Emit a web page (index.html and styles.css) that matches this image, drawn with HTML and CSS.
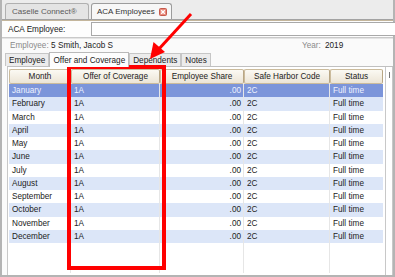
FILE: index.html
```html
<!DOCTYPE html>
<html>
<head>
<meta charset="utf-8">
<link rel="stylesheet" href="styles.css">
</head>
<body>
<div class="window">
  <div class="toptabs">
    <div class="ttab">Caselle Connect®</div>
    <div class="ttab active"><span>ACA Employees</span><span class="close"><svg width="8" height="8" viewBox="0 0 8 8"><rect x="0.5" y="0.5" width="7" height="7" rx="1" fill="#e98a7c" stroke="#c45a4c"/><path d="M2.2 2.2 L5.8 5.8 M5.8 2.2 L2.2 5.8" stroke="#fff" stroke-width="1.3"/></svg></span></div>
  </div>
  <div class="acarow">
    <span class="acalabel">ACA Employee:</span>
    <div class="acainput"></div>
  </div>
  <div class="emprow">
    <span class="lbl">Employee:</span>
    <span class="empnum">5</span>
    <span class="empname">Smith, Jacob S</span>
    <span class="lbl yearlbl">Year:</span>
    <span class="year">2019</span>
  </div>
  <div class="subtabs">
    <div class="stab">Employee</div>
    <div class="stab active">Offer and Coverage</div>
    <div class="stab">Dependents</div>
    <div class="stab">Notes</div>
  </div>
  <div class="panel">
    <div class="gridwrap">
      <table class="grid">
        <colgroup><col class="c1"><col class="c2"><col class="c3"><col class="c4"><col class="c5"></colgroup>
        <thead>
          <tr><th>Month</th><th>Offer of Coverage</th><th>Employee Share</th><th>Safe Harbor Code</th><th>Status</th></tr>
        </thead>
        <tbody>
          <tr class="sel"><td>January</td><td>1A</td><td class="num">.00</td><td>2C</td><td>Full time</td></tr>
          <tr class="alt"><td>February</td><td>1A</td><td class="num">.00</td><td>2C</td><td>Full time</td></tr>
          <tr><td>March</td><td>1A</td><td class="num">.00</td><td>2C</td><td>Full time</td></tr>
          <tr class="alt"><td>April</td><td>1A</td><td class="num">.00</td><td>2C</td><td>Full time</td></tr>
          <tr><td>May</td><td>1A</td><td class="num">.00</td><td>2C</td><td>Full time</td></tr>
          <tr class="alt"><td>June</td><td>1A</td><td class="num">.00</td><td>2C</td><td>Full time</td></tr>
          <tr><td>July</td><td>1A</td><td class="num">.00</td><td>2C</td><td>Full time</td></tr>
          <tr class="alt"><td>August</td><td>1A</td><td class="num">.00</td><td>2C</td><td>Full time</td></tr>
          <tr><td>September</td><td>1A</td><td class="num">.00</td><td>2C</td><td>Full time</td></tr>
          <tr class="alt"><td>October</td><td>1A</td><td class="num">.00</td><td>2C</td><td>Full time</td></tr>
          <tr><td>November</td><td>1A</td><td class="num">.00</td><td>2C</td><td>Full time</td></tr>
          <tr class="alt"><td>December</td><td>1A</td><td class="num">.00</td><td>2C</td><td>Full time</td></tr>
          <tr class="filler"><td></td><td></td><td></td><td></td><td></td></tr>
        </tbody>
      </table>
    </div>
    <div class="side"><span class="sidemark"></span></div>
  </div>
  <div class="redbox"></div>
  <svg class="arrow" width="395" height="277" viewBox="0 0 395 277">
    <line x1="191" y1="14" x2="158" y2="50" stroke="#ff0000" stroke-width="3"/>
    <polygon points="150,59 153.5,42 165,52" fill="#ff0000"/>
  </svg>
</div>
</body>
</html>
```

FILE: styles.css
```css
* { box-sizing: border-box; }
html, body { margin: 0; padding: 0; }
body {
  width: 395px;
  height: 277px;
  overflow: hidden;
  font-family: "Liberation Sans", Arial, sans-serif;
  font-size: 8.2px;
  color: #222;
  background: #fff;
}
.window {
  position: relative;
  width: 395px;
  height: 277px;
  border-left: 2px solid #b4b4b4;
  border-right: 2px solid #b4b4b4;
  border-bottom: 2px solid #b4b4b4;
  background: #fbfbfb;
  display: flex;
  flex-direction: column;
}
.toptabs {
  height: 20px;
  flex: none;
  background: #ececec;
  display: flex;
  align-items: flex-end;
  padding-left: 3px;
  gap: 2px;
  border-bottom: 1px solid #a3a3a3;
}
.ttab {
  height: 16px;
  padding: 0 3px 0 6px;
  border: 1px solid #b0b0b0;
  border-bottom: none;
  border-radius: 3px 3px 0 0;
  background: #e4e4e4;
  color: #5a5a5a;
  display: flex;
  align-items: center;
  font-size: 8px;
  width: 84px;
  white-space: nowrap;
}
.ttab.active {
  background: #f7f7f7;
  color: #333;
  width: auto;
  padding: 0 4px 0 5px;
  gap: 4px;
  border-color: #9c9c9c;
}
.close { display: flex; flex: none; margin-top: 1px; }
.acarow {
  height: 18px;
  flex: none;
  display: flex;
  align-items: center;
  border-top: 1px solid #c4b69c;
  border-bottom: 1px solid #c9c9c9;
  background: #fdfdfd;
}
.acalabel { width: 89px; padding-left: 6px; color: #222; }
.acainput {
  flex: 1;
  height: 14px;
  margin-right: -3px;
  border: 1px solid #a9a9a9;
  background: #fff;
}
.emprow {
  height: 14px;
  flex: none;
  display: flex;
  align-items: center;
  background: #fafafa;
  border-top: 1px solid #e4e4e4;
}
.lbl { color: #8a8a8a; }
.emprow .lbl:first-child { margin-left: 8px; width: 41px; }
.empnum { width: 7px; }
.empname { width: 244px; }
.yearlbl { width: 23px; }
.subtabs {
  height: 14px;
  flex: none;
  display: flex;
  align-items: flex-end;
  padding-left: 3px;
  background: #fafafa;
}
.stab {
  height: 13px;
  padding: 0 3px;
  border: 1px solid #c6c6c6;
  border-bottom: none;
  background: #ececec;
  display: flex;
  align-items: center;
  font-size: 8.2px;
  white-space: nowrap;
}
.stab.active {
  height: 15px;
  margin-bottom: -1px;
  background: #fdfdfd;
  border-color: #b9b9b9;
  position: relative;
  z-index: 1;
}
.panel {
  flex: 1;
  display: flex;
  border-top: 1px solid #c0c0c0;
  margin-left: 5px;
  background: #fff;
}
.gridwrap {
  width: 379px;
  border-left: 1px solid #c8c8c8;
  border-right: 1px solid #c8c8c8;
  padding: 2px 1px 0 1px;
  display: flex;
}
.grid {
  border-collapse: separate;
  border-spacing: 0;
  table-layout: fixed;
  width: 374px;
  height: 204px;
}
.c1 { width: 62px; }
.c2 { width: 89px; }
.c3 { width: 84px; }
.c4 { width: 86px; }
.c5 { width: 53px; }
.grid th {
  height: 15px;
  font-weight: normal;
  text-align: center;
  padding: 0;
  background: linear-gradient(#fbf9f3, #ece5d6);
  border: 1px solid #cbbb9c;
  border-right-color: #b8a684;
  border-radius: 2px;
  color: #222;
}
.grid td {
  height: 13.25px;
  padding: 0 0 0 3px;
  border-right: 1px solid #e6e6e6;
  white-space: nowrap;
  overflow: hidden;
  line-height: 13px;
}
.grid td:last-child { border-right: none; }
.grid td.num { text-align: right; padding-right: 2px; }
.grid tr.alt td { background: #dce6f8; }
.grid tr.sel td { background: #7c95da; color: #eef2ff; }
.grid tr.filler td { height: auto; }
.side {
  width: 7px;
  border-right: 1px solid #c8c8c8;
  position: relative;
}
.sidemark {
  position: absolute;
  left: 3px;
  top: 5px;
  width: 1px;
  height: 6px;
  background: #777;
}
.redbox {
  position: absolute;
  left: 65px;
  top: 65px;
  width: 99px;
  height: 205px;
  border: 4px solid #ff0000;
}
.arrow {
  position: absolute;
  left: -2px;
  top: 0;
}
```
